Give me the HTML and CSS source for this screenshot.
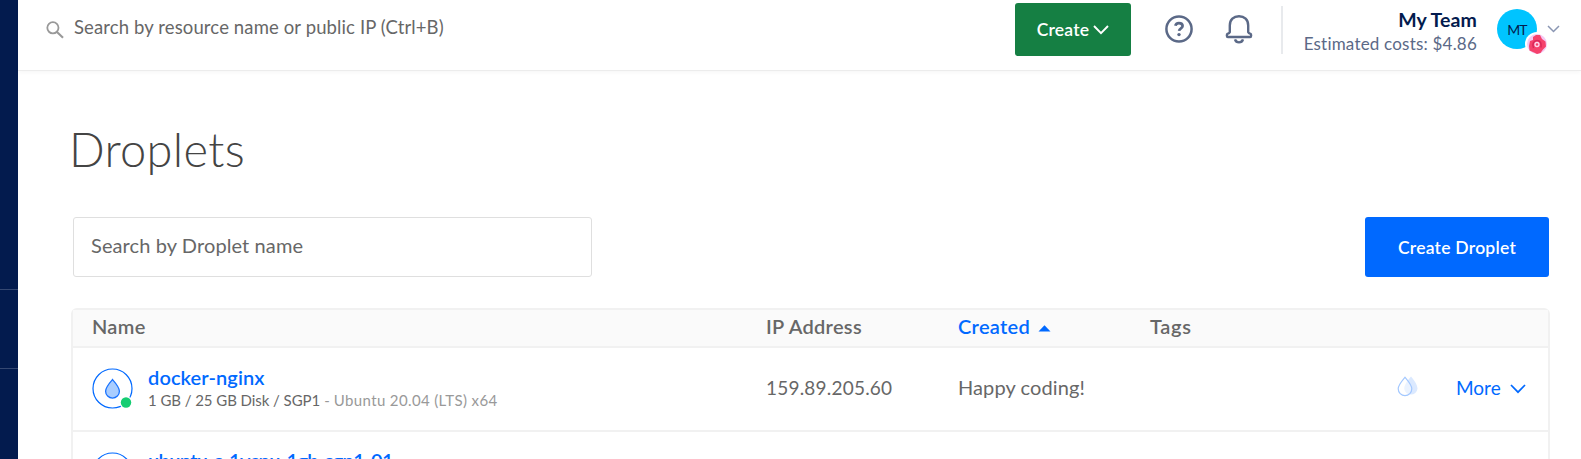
FILE: index.html
```
<!DOCTYPE html>
<html lang="en">
<head>
<meta charset="utf-8">
<title>Droplets</title>
<link rel="stylesheet" href="styles.css">
</head>
<body>
<div class="app">
  <nav class="sidebar"><div class="group group-top"></div><div class="group group-mid"></div></nav>
  <div class="main">
    <header class="topbar">
      <div class="search">
        <svg class="search-icon" width="18" height="18" viewBox="0 0 18 18" fill="none" stroke="#999" stroke-width="1.8"><circle cx="6.9" cy="6.8" r="5.6"/><path d="M11 11l6 5.8" stroke-width="2.1"/></svg>
        <span class="search-text">Search by resource name or public IP (Ctrl+B)</span>
      </div>
      <button class="create"><span>Create</span><svg width="16" height="10" viewBox="0 0 16 10" fill="none" stroke="#fff" stroke-width="1.9"><path d="M1 1l7 7.2L15 1"/></svg></button>
      <svg class="help" width="28" height="28" viewBox="0 0 28 28" fill="none" stroke="#5b6987" stroke-width="2.5"><circle cx="14" cy="14" r="12.6"/><path d="M10.400 10.800c.3-1.800 1.700-2.700 3.500-2.700 2.100 0 3.700 1 3.700 2.900 0 2.400-3.300 2.200-3.500 4.900" stroke-width="2.700"/><circle cx="14" cy="19.600" r="1.700" fill="#5b6987" stroke="none"/></svg>
      <svg class="bell" width="28" height="30" viewBox="0 0 28 30" fill="none" stroke="#5b6987" stroke-width="2.400" stroke-linejoin="round"><path d="M4.800 18.200V11.500C4.800 5.800 8.600 2.200 14 2.200s9.200 3.600 9.200 9.300v6.700c.3.900.9 1.300 2.300 1.700.8.400 1 3.100-.4 3.100H2.900c-1.400 0-1.200-2.700-.4-3.100 1.400-.4 2-.8 2.300-1.700z"/><path d="M10 25.400c.6 2 2.100 3 4 3s3.400-1 4-3"/></svg>
      <div class="team">
        <div class="team-name">My Team</div>
        <div class="team-cost">Estimated costs: $4.86</div>
      </div>
      <div class="avatar">MT
        <svg class="badge" width="24" height="24" viewBox="0 0 24 24"><circle cx="12" cy="12" r="12" fill="#fff"/><circle cx="12" cy="12" r="10" fill="#f5c9f3"/><path d="M8 5l3-2h4l2 4 3.500 2.500.5 5-3 3-2.500 3.500-3.500 1-3-1.500-4.500-2L4 14l1-5 3-1z" fill="#f5426c"/><path d="M8.500 16c-1.800-4 .3-7.500 3.500-7.500s4.700 2.500 4 7" fill="none" stroke="#d9265a" stroke-width="1.500"/><circle cx="12" cy="12.500" r="2" fill="#f5426c" stroke="#ffd9f0" stroke-width="1.300"/></svg>
      </div>
      <svg class="caret" width="13" height="8" viewBox="0 0 13 8" fill="none" stroke="#8a96b3" stroke-width="1.500"><path d="M1 1l5.500 5.500L12 1"/></svg>
    </header>
    <main class="content">
      <h1 class="title">Droplets</h1>
      <div class="toolbar">
        <div class="filter">Search by Droplet name</div>
        <button class="create-droplet">Create Droplet</button>
      </div>
      <div class="table">
        <div class="row head">
          <div class="h-name">Name</div>
          <div class="h-ip">IP Address</div>
          <div class="h-created"><span>Created</span><svg width="13" height="7" viewBox="0 0 13 7"><path d="M.5 6.500L6.500.3l6 6.200z" fill="#0069ff"/></svg></div>
          <div class="h-tags">Tags</div>
        </div>
        <div class="row item">
          <div class="name-cell">
            <svg class="status" width="41" height="41" viewBox="0 0 41 41"><circle cx="20.500" cy="20.500" r="19.500" fill="#fff" stroke="#0069ff" stroke-width="1.200"/><path d="M20.500 11.500c2.200 2.500 6.900 7.800 6.900 11.700a6.900 6.900 0 0 1-13.800 0c0-3.900 4.700-9.200 6.900-11.700z" fill="#a9cdff" stroke="#1a73ff" stroke-width="1.300"/><circle cx="34" cy="34.500" r="6.500" fill="#fff"/><circle cx="34" cy="34.500" r="5.200" fill="#15cd72"/></svg>
            <div class="info">
              <div class="link">docker-nginx</div>
              <div class="sub"><span class="spec">1 GB / 25 GB Disk / SGP1</span><span class="dash">-</span><span class="image">Ubuntu 20.04 (LTS) x64</span></div>
            </div>
          </div>
          <div class="ip">159.89.205.60</div>
          <div class="created">Happy coding!</div>
          <div></div>
          <div class="actions">
            <svg width="21" height="21" viewBox="0 0 21 21"><path d="M14 .5c2 2.500 6.500 7.500 6.500 12.200a6.700 6.700 0 0 1-13.300 0C7.200 8 12 3 14 .5z" fill="#dbe9ff"/><path d="M8 1.300c2 2.400 6.800 7.600 6.800 11.500a6.800 6.800 0 0 1-13.600 0C1.200 8.900 6 3.700 8 1.300z" fill="#fff" fill-opacity=".45" stroke="#a3c8ff" stroke-width="1.200"/></svg>
            <span class="more">More</span>
            <svg class="more-caret" width="16" height="10" viewBox="0 0 16 10" fill="none" stroke="#0069ff" stroke-width="1.700"><path d="M1 1l7 7.200L15 1"/></svg>
          </div>
        </div>
        <div class="row item">
          <div class="name-cell">
            <svg class="status" width="41" height="41" viewBox="0 0 41 41"><circle cx="20.500" cy="20.500" r="19.500" fill="#fff" stroke="#0069ff" stroke-width="1.200"/></svg>
            <div class="info info-long"><div class="link link-long">ubuntu-s-1vcpu-1gb-sgp1-01</div></div>
          </div>
        </div>
      </div>
    </main>
  </div>
</div>
</body>
</html>
```
FILE: styles.css
```
* { box-sizing: border-box; }
body { margin: 0; background: #fff; color: #676767; font-family: Lato, "Open Sans", sans-serif; }
button { border: 0; margin: 0; padding: 0; font-family: inherit; color: #fff; }
svg { display: block; flex: none; }
.app { display: flex; height: 459px; overflow: hidden; white-space: nowrap; }

.sidebar { width: 18px; flex: none; background: #031b4e; }
.group { border-bottom: 1px solid #354872; }
.group-top { height: 290px; }
.group-mid { height: 79px; }

.main { flex: 1; min-width: 0; }
.topbar { display: flex; align-items: flex-start; height: 71px; border-bottom: 1px solid #ececec; box-shadow: 0 2px 4px rgba(0,0,0,.03); }
.search { display: flex; width: 997px; padding-left: 28px; }
.search-icon { margin: 21px 10px 0 0; }
.search-text { font-size: 18.5px; line-height: 54px; letter-spacing: .12px; }
.create { display: flex; align-items: center; justify-content: center; gap: 4px; width: 116px; height: 53px; margin-top: 3px; border-radius: 3px; background: #157f43; font-size: 17.5px; font-weight: 600; line-height: 51px; letter-spacing: .2px; }
.help { margin: 15px 0 0 34px; }
.bell { margin: 14px 0 0 32px; }
.team { width: 196px; height: 48px; margin: 6px 0 0 28px; padding-top: 2px; border-left: 2px solid #e8eaed; text-align: right; }
.team-name { font-size: 19.5px; font-weight: 700; line-height: 24px; letter-spacing: .1px; color: #031b4e; }
.team-cost { font-size: 17px; line-height: 24px; letter-spacing: .2px; color: #5b6987; }
.avatar { position: relative; width: 40px; height: 40px; margin: 9px 0 0 20px; border-radius: 50%; background: #00c4ff; color: #031b4e; font-size: 14px; line-height: 41px; letter-spacing: -.8px; text-align: center; }
.badge { position: absolute; left: 28px; top: 23px; }
.caret { margin: 25px 0 0 10px; }

.content { padding: 48px 31px 0 53px; }
.title { margin: 0 0 0 -2px; font-size: 47px; font-weight: 300; line-height: 61px; letter-spacing: .3px; color: #444; }
.toolbar { display: flex; justify-content: space-between; margin: 37px 1px 0 2px; }
.filter { width: 519px; height: 60px; padding-left: 17px; border: 1px solid #dfdfdf; border-radius: 3px; font-size: 20px; line-height: 55px; letter-spacing: .1px; }
.create-droplet { width: 184px; height: 60px; padding-top: 2px; border-radius: 3px; background: #0069ff; font-size: 17.5px; font-weight: 600; line-height: 58px; letter-spacing: .25px; }

.table { margin-top: 31px; border: 2px solid #f1f1f1; border-radius: 6px 6px 0 0; height: 170px; }
.row { display: grid; grid-template-columns: 693px 192px 192px 247px 1fr; border-bottom: 2px solid #f1f1f1; font-size: 19px; }
.head { height: 38px; background: #fafafa; font-size: 20px; font-weight: 600; line-height: 33px; letter-spacing: .3px; }
.h-name { padding-left: 19px; }
.h-created { display: flex; gap: 8px; color: #0069ff; }
.h-created svg { margin-top: 15px; }
.h-tags { letter-spacing: .7px; }
.item { height: 84px; line-height: 79px; }
.name-cell { display: flex; padding-left: 19px; }
.status { margin: 20px 15px 0 0; }
.info { padding-top: 17px; }
.info-long { padding-top: 16px; }
.link { font-size: 20px; font-weight: 600; line-height: 25px; letter-spacing: .1px; color: #0069ff; }
.link-long { letter-spacing: -.65px; }
.sub { display: flex; font-size: 15px; line-height: 20px; }
.spec { letter-spacing: -.06px; }
.dash { margin-left: 4px; color: #999; }
.image { margin-left: 4px; line-height: 21px; letter-spacing: .37px; color: #999; }
.ip { letter-spacing: .2px; }
.created { font-size: 20px; letter-spacing: .1px; }
.actions { display: flex; color: #0069ff; }
.actions > svg { margin-top: 28px; }
.more { margin-left: 38px; }
.actions .more-caret { margin: 36px 0 0 9px; }
```
